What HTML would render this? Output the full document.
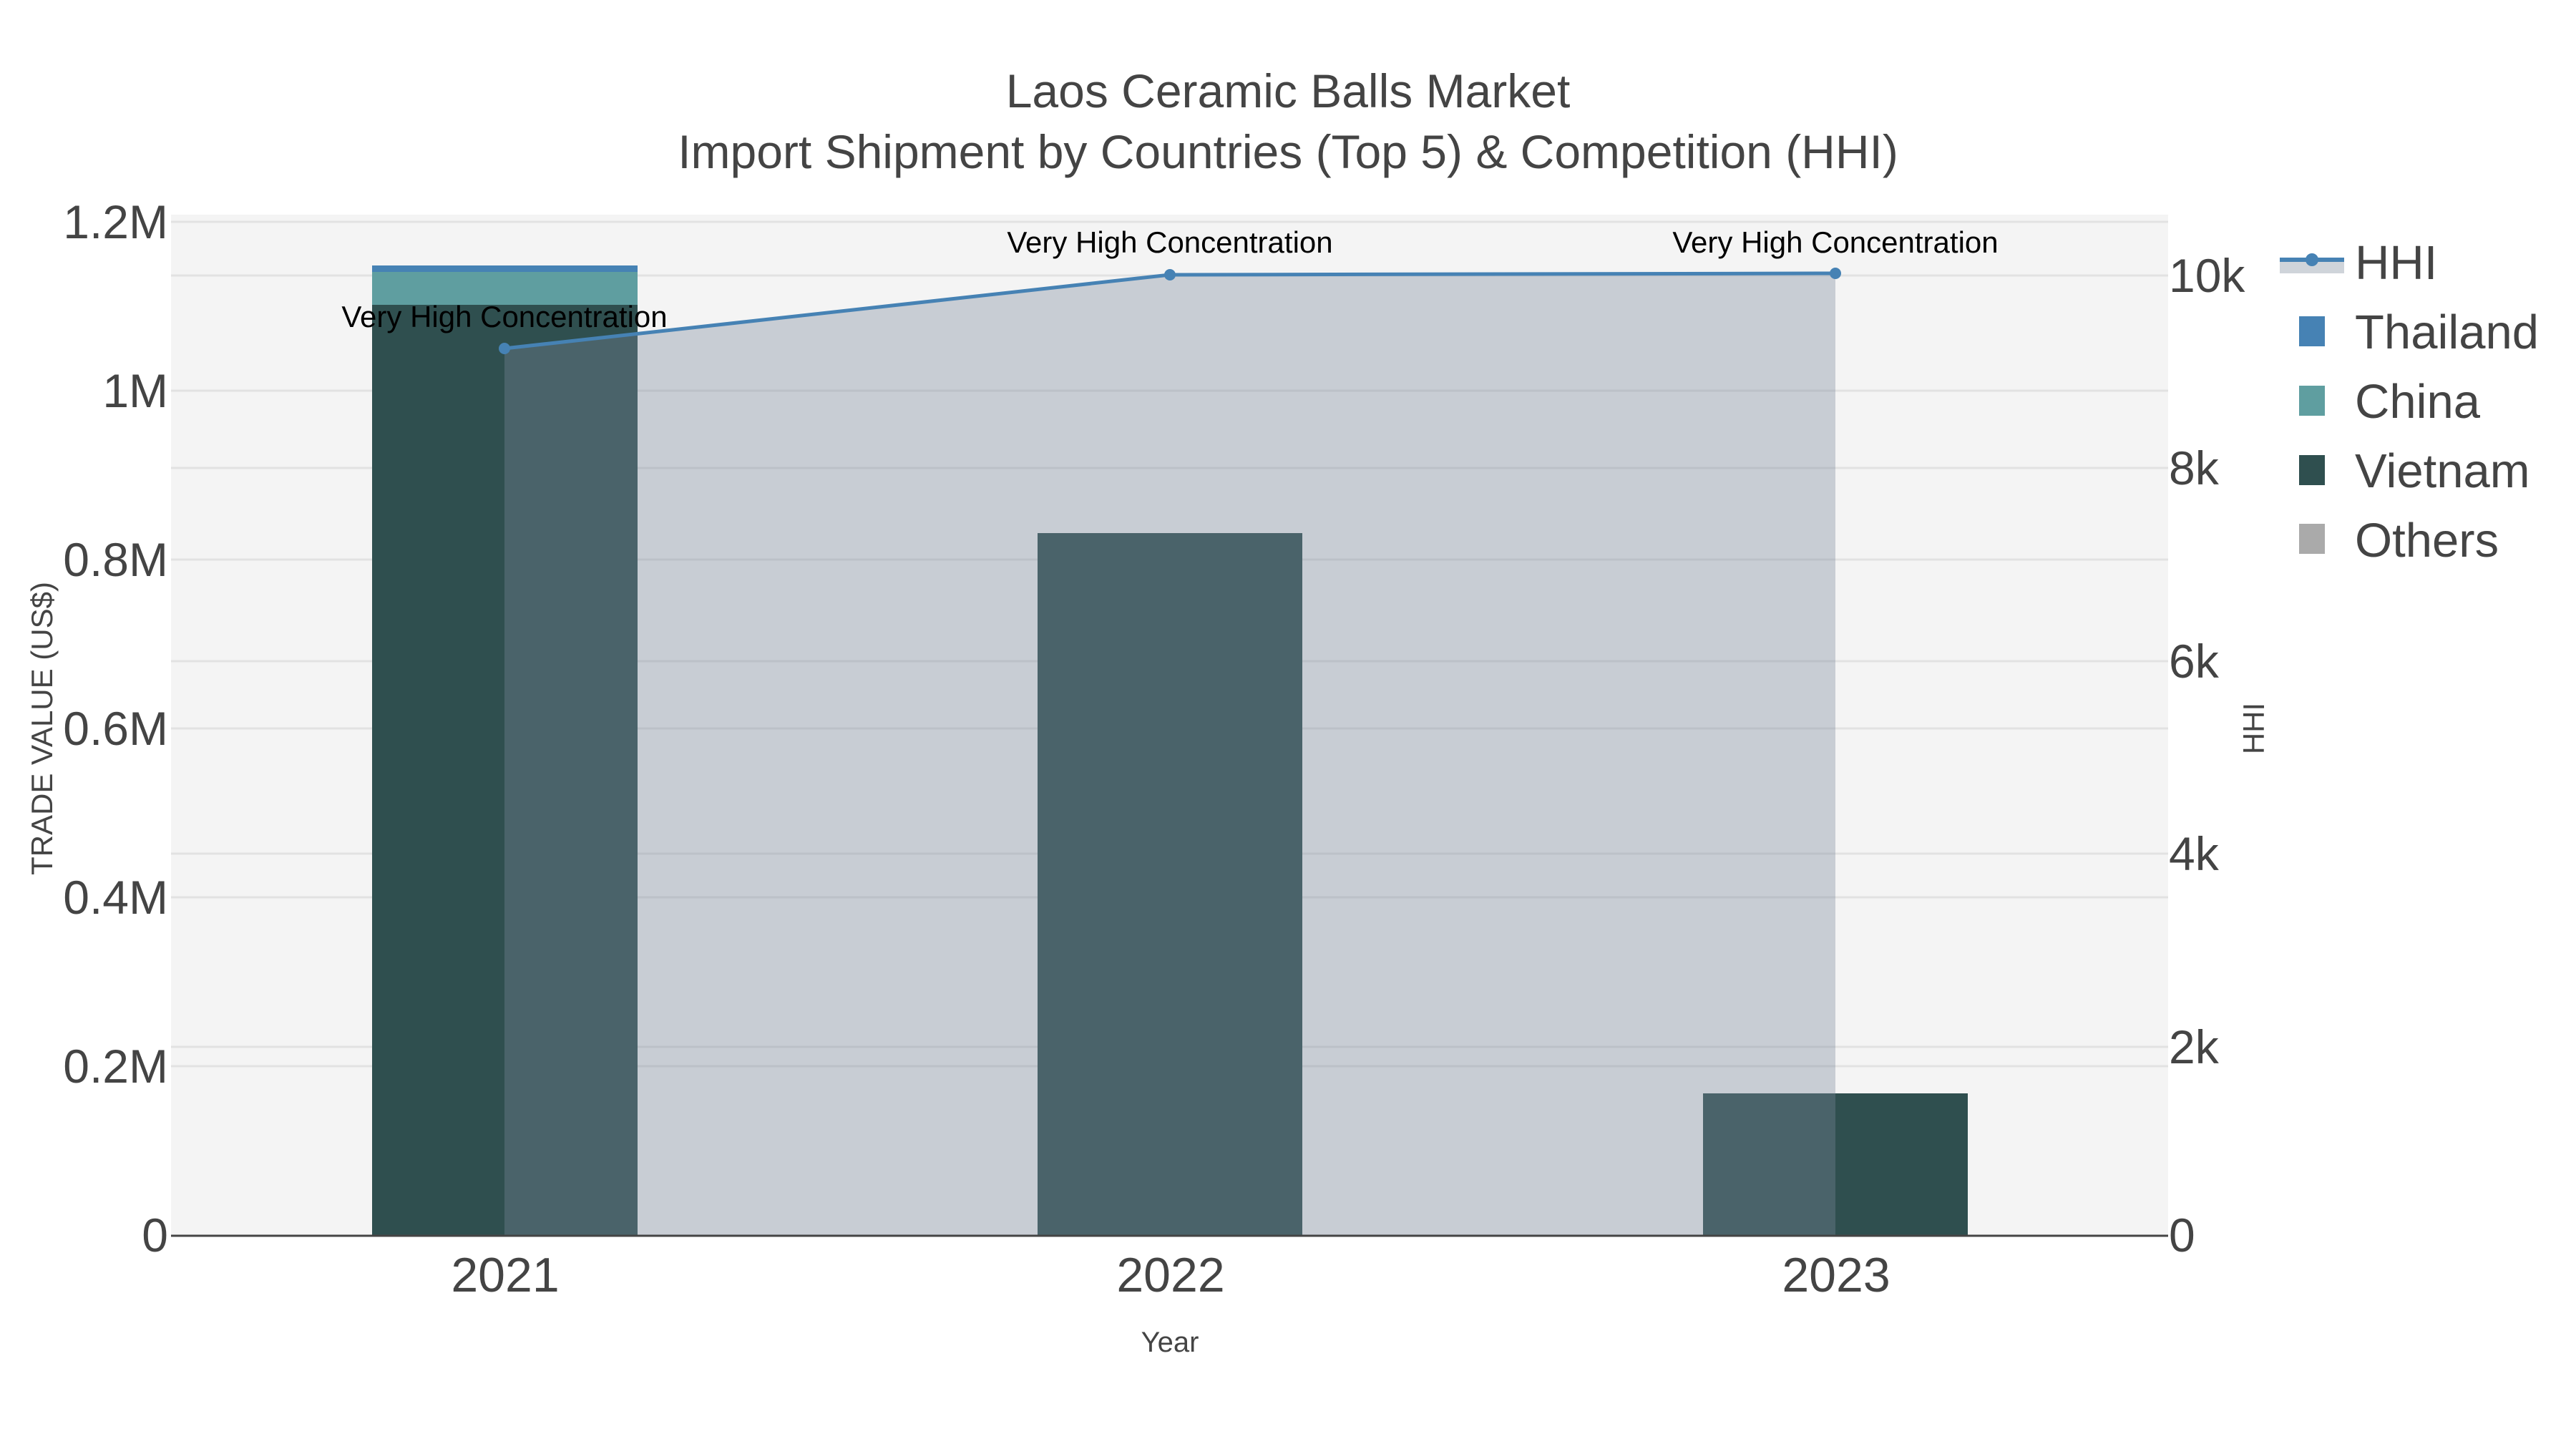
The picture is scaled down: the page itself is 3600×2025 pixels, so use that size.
<!DOCTYPE html>
<html><head><meta charset="utf-8"><style>
html,body{margin:0;padding:0;background:#fff}
svg{display:block}
text{font-family:"Liberation Sans",sans-serif}
</style></head><body>
<svg width="3600" height="2025" viewBox="0 0 3600 2025" xmlns="http://www.w3.org/2000/svg">
<rect x="0" y="0" width="3600" height="2025" fill="#fff"/>
<rect x="239" y="300" width="2791" height="1426" fill="#f4f4f4"/>
<g stroke="#e2e2e2" stroke-width="3">
<line x1="239" x2="3030" y1="310" y2="310"/>
<line x1="239" x2="3030" y1="546" y2="546"/>
<line x1="239" x2="3030" y1="782" y2="782"/>
<line x1="239" x2="3030" y1="1018" y2="1018"/>
<line x1="239" x2="3030" y1="1254" y2="1254"/>
<line x1="239" x2="3030" y1="1490" y2="1490"/>
<line x1="239" x2="3030" y1="385" y2="385"/>
<line x1="239" x2="3030" y1="654" y2="654"/>
<line x1="239" x2="3030" y1="924" y2="924"/>
<line x1="239" x2="3030" y1="1193" y2="1193"/>
<line x1="239" x2="3030" y1="1463" y2="1463"/>
</g>
<rect x="520" y="371" width="371" height="10" fill="#4682b4"/>
<rect x="520" y="380" width="371" height="47" fill="#5f9ea0"/>
<rect x="520" y="426" width="371" height="1300" fill="#2f4f4f"/>
<rect x="1450" y="745" width="370" height="981" fill="#2f4f4f"/>
<rect x="2380" y="1528" width="370" height="198" fill="#2f4f4f"/>
<polygon points="705,487 1635,384 2565,382 2565,1726 705,1726" fill="rgba(122,136,155,0.36)"/>
<polyline points="705,487 1635,384 2565,382" fill="none" stroke="#4682b4" stroke-width="5"/>
<circle cx="705" cy="487" r="8" fill="#4682b4"/>
<circle cx="1635" cy="384" r="8" fill="#4682b4"/>
<circle cx="2565" cy="382" r="8" fill="#4682b4"/>
<line x1="239" x2="3030" y1="1727" y2="1727" stroke="#444" stroke-width="3"/>
<g font-size="42" fill="#000" text-anchor="middle">
<text x="705" y="457">Very High Concentration</text>
<text x="1635" y="353">Very High Concentration</text>
<text x="2565" y="353">Very High Concentration</text>
</g>
<g fill="#444" text-anchor="middle" font-size="66">
<text x="1800" y="150">Laos Ceramic Balls Market</text>
<text x="1800" y="235">Import Shipment by Countries (Top 5) &amp; Competition (HHI)</text>
</g>
<g fill="#444" font-size="66" text-anchor="end">
<text x="235" y="333">1.2M</text>
<text x="235" y="569">1M</text>
<text x="235" y="805">0.8M</text>
<text x="235" y="1041">0.6M</text>
<text x="235" y="1277">0.4M</text>
<text x="235" y="1513">0.2M</text>
<text x="235" y="1749">0</text>
</g>
<g fill="#444" font-size="66" text-anchor="start">
<text x="3031" y="408">10k</text>
<text x="3031" y="677">8k</text>
<text x="3031" y="947">6k</text>
<text x="3031" y="1216">4k</text>
<text x="3031" y="1486">2k</text>
<text x="3031" y="1749">0</text>
</g>
<g fill="#444" font-size="68" text-anchor="middle">
<text x="706" y="1805">2021</text>
<text x="1636" y="1805">2022</text>
<text x="2566" y="1805">2023</text>
</g>
<text x="1635" y="1889" fill="#444" font-size="40" text-anchor="middle">Year</text>
<text transform="translate(73,1018) rotate(-90)" fill="#444" font-size="42" text-anchor="middle">TRADE VALUE (US$)</text>
<text transform="translate(3164,1018) rotate(-90)" fill="#444" font-size="42" text-anchor="middle">HHI</text>
<rect x="3186" y="362" width="90" height="20" fill="#cfd4da"/>
<line x1="3186" x2="3276" y1="363" y2="363" stroke="#4682b4" stroke-width="6"/>
<circle cx="3231" cy="363" r="9" fill="#4682b4"/>
<rect x="3213" y="442" width="36" height="42" fill="#4682b4"/>
<rect x="3213" y="539" width="36" height="42" fill="#5f9ea0"/>
<rect x="3213" y="636" width="36" height="42" fill="#2f4f4f"/>
<rect x="3213" y="732" width="36" height="42" fill="#aaaaaa"/>
<g fill="#444" font-size="67">
<text x="3291" y="390">HHI</text>
<text x="3291" y="487">Thailand</text>
<text x="3291" y="584">China</text>
<text x="3291" y="681">Vietnam</text>
<text x="3291" y="778">Others</text>
</g>
</svg>
</body></html>
